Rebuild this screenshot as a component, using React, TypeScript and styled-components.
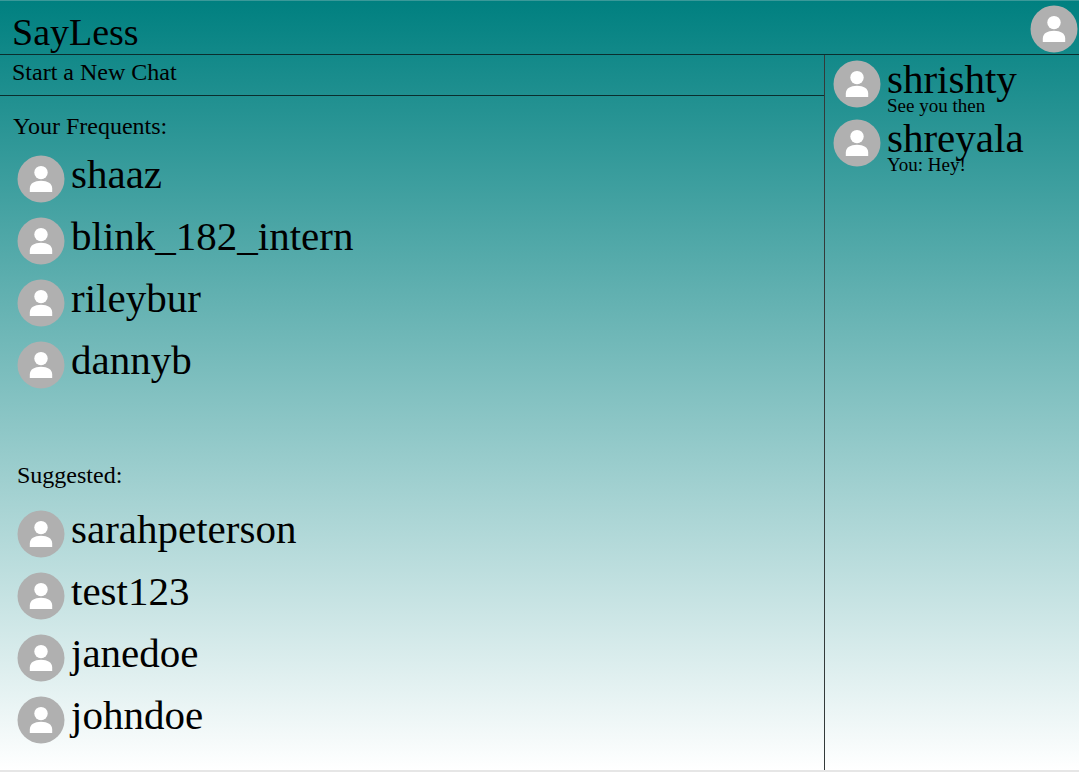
import React from "react";
import styled, { createGlobalStyle } from "styled-components";

const GlobalStyle = createGlobalStyle`
  *, *::before, *::after { box-sizing: border-box; }
  body {
    margin: 0;
    font-family: "Liberation Serif", "Times New Roman", serif;
    color: #000;
  }
  h1, h2, p, ul { margin: 0; padding: 0; font-weight: 400; }
  ul { list-style: none; }
  button {
    margin: 0;
    padding: 0;
    border: 0;
    background: none;
    color: inherit;
    font: inherit;
    text-align: left;
    cursor: pointer;
  }
`;

const Page = styled.div`
  display: flex;
  flex-direction: column;
  min-height: 100vh;
  border-top: 1px solid #3a9999;
  border-bottom: 2px solid #e6e6e6;
  background: linear-gradient(#008080, #ffffff) padding-box;
`;

const Header = styled.header`
  display: flex;
  align-items: flex-start;
  justify-content: space-between;
  height: 54px;
  padding: 4px 1px 0 12px;
  border-bottom: 1px solid #0a2e2e;
`;

const Title = styled.h1`
  font-size: 38px;
  line-height: 54px;
`;

const ProfileButton = styled.button`
  display: flex;
  border-radius: 50%;
`;

const Columns = styled.div`
  display: flex;
  flex: 1;
`;

const Main = styled.main`
  flex: 1;
  min-width: 0;
`;

const NewChatBar = styled.div`
  display: flex;
  height: 41px;
  padding: 3px 12px 0;
  border-bottom: 1px solid #0a2e2e;
`;

const NewChatButton = styled.button`
  align-self: flex-start;
  font-size: 24px;
  line-height: 28px;
`;

const Section = styled.section<{ $top: number }>`
  padding: ${({ $top }) => $top}px 17px 0;
`;

const SectionTitle = styled.h2<{ $outdent?: boolean; $space: number }>`
  margin-left: ${({ $outdent }) => ($outdent ? -4 : 0)}px;
  margin-bottom: ${({ $space }) => $space}px;
  font-size: 24px;
  line-height: 28px;
`;

const UserList = styled.ul<{ $gap: number }>`
  display: flex;
  flex-direction: column;
  gap: ${({ $gap }) => $gap}px;
`;

const UserButton = styled.button`
  display: flex;
  align-items: flex-start;
  gap: 6px;
`;

const UserName = styled.span`
  display: block;
  font-size: 41px;
  line-height: 39px;
`;

const Preview = styled.span`
  display: block;
  font-size: 19px;
  line-height: 14px;
`;

const Sidebar = styled.aside`
  flex: 0 0 255px;
  padding: 5px 8px;
  border-left: 1px solid #333a3a;
`;

const AvatarIcon = styled.svg`
  display: block;
  flex: none;
  width: 48px;
  height: 48px;
`;

function Avatar() {
  return (
    <AvatarIcon viewBox="0 0 48 48" aria-hidden="true">
      <circle cx="24" cy="24" r="23.5" fill="#b0b0b0" />
      <circle cx="24" cy="17.6" r="6.7" fill="#fff" />
      <path
        d="M12.8 37v-3.6c0-4.8 4.6-7.6 11.2-7.6s11.2 2.8 11.2 7.6V37z"
        fill="#fff"
      />
    </AvatarIcon>
  );
}

interface User {
  name: string;
  preview?: string;
}

const frequents: User[] = [
  { name: "shaaz" },
  { name: "blink_182_intern" },
  { name: "rileybur" },
  { name: "dannyb" },
];

const suggested: User[] = [
  { name: "sarahpeterson" },
  { name: "test123" },
  { name: "janedoe" },
  { name: "johndoe" },
];

const chats: User[] = [
  { name: "shrishty", preview: "See you then" },
  { name: "shreyala", preview: "You: Hey!" },
];

function Users({ users, gap }: { users: User[]; gap: number }) {
  return (
    <UserList $gap={gap}>
      {users.map(({ name, preview }) => (
        <li key={name}>
          <UserButton type="button">
            <Avatar />
            <span>
              <UserName>{name}</UserName>
              {preview && <Preview>{preview}</Preview>}
            </span>
          </UserButton>
        </li>
      ))}
    </UserList>
  );
}

export default function App() {
  return (
    <>
      <GlobalStyle />
      <Page>
        <Header>
          <Title>SayLess</Title>
          <ProfileButton type="button" aria-label="Profile">
            <Avatar />
          </ProfileButton>
        </Header>
        <Columns>
          <Main>
            <NewChatBar>
              <NewChatButton type="button">Start a New Chat</NewChatButton>
            </NewChatBar>
            <Section $top={16}>
              <SectionTitle $outdent $space={15}>
                Your Frequents:
              </SectionTitle>
              <Users users={frequents} gap={14} />
            </Section>
            <Section $top={72}>
              <SectionTitle $space={21}>Suggested:</SectionTitle>
              <Users users={suggested} gap={14} />
            </Section>
          </Main>
          <Sidebar aria-label="Chats">
            <Users users={chats} gap={6} />
          </Sidebar>
        </Columns>
      </Page>
    </>
  );
}
